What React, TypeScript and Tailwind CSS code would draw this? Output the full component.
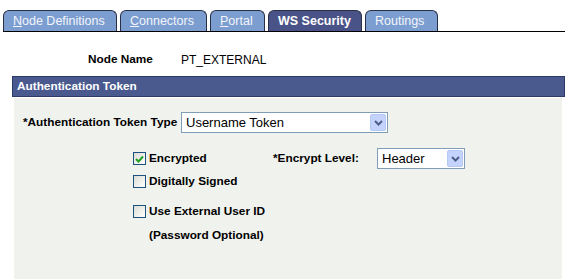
import React from 'react';

const tabs = [
  { label: 'Node Definitions', key: 'N', rest: 'ode Definitions', w: 'w-[114px]' },
  { label: 'Connectors', key: 'C', rest: 'onnectors', w: 'w-[87px]' },
  { label: 'Portal', key: 'P', rest: 'ortal', w: 'w-[55px]' },
  { label: 'WS Security', key: '', rest: 'WS Security', w: 'w-[94px]', active: true },
  { label: 'Routings', key: '', rest: 'Routings', w: 'w-[73px]' },
];

const Chevron = () => (
  <svg width="9" height="6" viewBox="0 0 9 6">
    <path d="M1 1 L4.5 4.5 L8 1" stroke="#4d5f86" strokeWidth="2" fill="none" />
  </svg>
);

const Select = ({ value, w }: { value: string; w: string }) => (
  <div className={`${w} h-[21px] flex items-center bg-white border border-[#7f9db9] pl-[4px] pr-[1px]`}>
    <span className="flex-1 text-[13px] text-black leading-none">{value}</span>
    <div className="w-[16px] h-[17px] rounded-[2px] bg-[#c3d3fd] border border-[#b6c8f5] flex items-center justify-center">
      <Chevron />
    </div>
  </div>
);

const Checkbox = ({ checked, label }: { checked?: boolean; label: string }) => (
  <div className="flex items-center gap-[3px]">
    <div className="w-[13px] h-[13px] border border-[#1c5180] bg-gradient-to-br from-[#dcdcd6] to-white flex items-center justify-center">
      {checked && (
        <svg width="9" height="8" viewBox="0 0 9 8">
          <path d="M1 4 L3.5 6.5 L8 1.5" stroke="#21a121" strokeWidth="2" fill="none" />
        </svg>
      )}
    </div>
    <span className="text-[11.8px] font-bold text-black">{label}</span>
  </div>
);

export default function App() {
  return (
    <div className="w-[577px] h-[279px] bg-white overflow-hidden" style={{ fontFamily: 'Arial, "Liberation Sans", sans-serif' }}>
      {/* tab strip */}
      <div className="ml-[3px] mt-[10px] w-[562px] flex gap-[3px] border-b border-black">
        {tabs.map(t => (
          <div
            key={t.label}
            className={`${t.w} h-[21px] rounded-t-[6px] border border-b-0 border-[#2a2f45] flex items-center pl-[9px] text-[12.5px] ${
              t.active ? 'bg-[#4a5387] text-white font-bold pl-[8px]' : 'bg-[#7c9dd0] text-[#f2f5fb]'
            }`}
          >
            {t.key && <span className="underline">{t.key}</span>}
            {t.rest}
          </div>
        ))}
      </div>

      <div className="flex items-center h-[34px] mt-[11px]">
        <span className="ml-[88px] w-[93px] text-[11.8px] font-bold text-black">Node Name</span>
        <span className="text-[12px] text-black">PT_EXTERNAL</span>
      </div>

      {/* section header */}
      <div className="ml-[12px] mt-[-1px] w-[553px] h-[21px] bg-[#4a5a8e] border border-[#2e3a66] flex items-center pl-[4px]">
        <span className="text-[11.8px] font-bold text-white">Authentication Token</span>
      </div>

      {/* panel */}
      <div className="ml-[14px] mt-[1px] w-[548px] h-[190px] bg-[#f0f2ee] pt-[14px]">
        <div className="flex items-center">
          <span className="ml-[9px] w-[158px] text-[11.8px] font-bold text-black">*Authentication Token Type</span>
          <Select value="Username Token" w="w-[207px]" />
        </div>

        <div className="flex items-center mt-[15px]">
          <div className="ml-[119px] w-[140px]">
            <Checkbox checked label="Encrypted" />
          </div>
          <span className="w-[104px] text-[11.8px] font-bold text-black">*Encrypt Level:</span>
          <Select value="Header" w="w-[88px]" />
        </div>

        <div className="ml-[119px] mt-[4px]">
          <Checkbox label="Digitally Signed" />
        </div>

        <div className="ml-[119px] mt-[12px]">
          <Checkbox label="Use External User ID" />
        </div>

        <div className="ml-[135px] mt-[7px] text-[11.8px] font-bold text-black">(Password Optional)</div>
      </div>
    </div>
  );
}
